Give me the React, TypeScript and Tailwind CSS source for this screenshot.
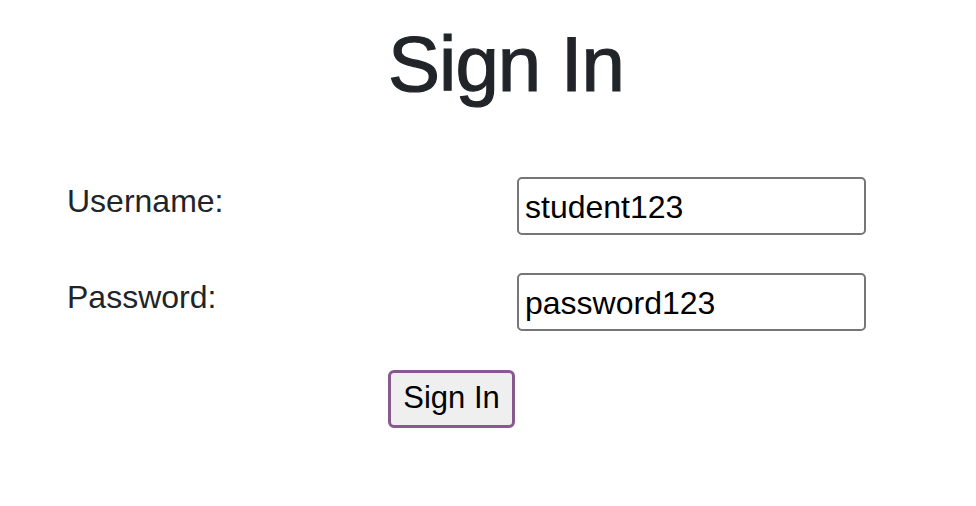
import React, { useState } from 'react';

const App = () => {
    const [username, setUsername] = useState('student123');
    const [password, setPassword] = useState('password123');

    return (
        <div className="min-h-[506px] w-full bg-white text-[#212529] font-['Liberation_Sans',Arial,sans-serif]">
            {/* Title */}
            <h1 className="pt-[18px] pl-[36px] text-center text-[78px] leading-[1.2] font-medium tracking-[-1px] [-webkit-text-stroke:1.2px_#212529]">
                Sign In
            </h1>

            <form className="mt-[65px] pl-[67px] flex flex-col" onSubmit={(e) => e.preventDefault()}>
                <div className="flex items-start">
                    <label htmlFor="username" className="w-[450px] text-[32px] leading-[48px]">
                        Username:
                    </label>
                    <input
                        id="username"
                        type="text"
                        value={username}
                        onChange={(e) => setUsername(e.target.value)}
                        className="w-[349px] h-[58px] px-[6px] pt-[3px] border-2 border-[#767676] rounded-[5px] text-[32px] text-black outline-none"
                    />
                </div>

                <div className="flex items-start mt-[38px]">
                    <label htmlFor="password" className="w-[450px] text-[32px] leading-[48px]">
                        Password:
                    </label>
                    <input
                        id="password"
                        type="text"
                        value={password}
                        onChange={(e) => setPassword(e.target.value)}
                        className="w-[349px] h-[58px] px-[6px] pt-[3px] border-2 border-[#767676] rounded-[5px] text-[32px] text-black outline-none"
                    />
                </div>

                <div className="mt-[39px]">
                    <button
                        type="submit"
                        className="ml-[321px] w-[127px] h-[58px] bg-[#efefef] border-[3px] border-[#86598f] rounded-[6px] text-[31px] text-black"
                    >
                        Sign In
                    </button>
                </div>
            </form>
        </div>
    );
};

export default App;
